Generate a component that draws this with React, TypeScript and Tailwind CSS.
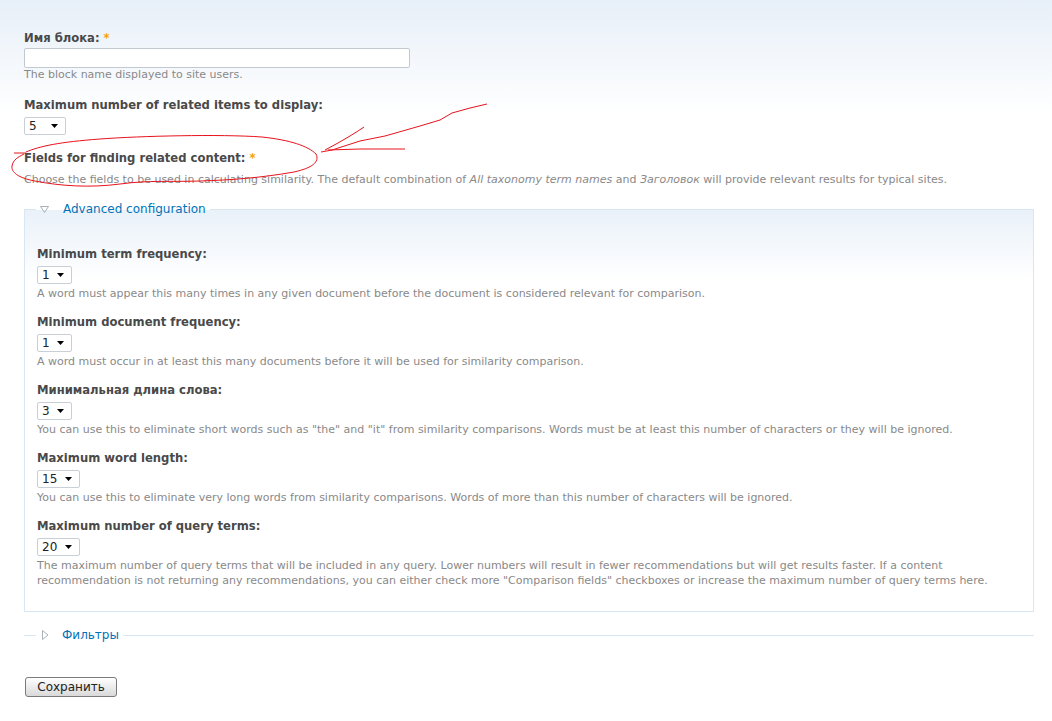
import React from 'react';

const font = "font-['DejaVu_Sans',Verdana,sans-serif]";

function Star() {
  return <span className="text-[#f5a300] font-bold ml-1">*</span>;
}

function Select({ value, width }: { value: string; width: string }) {
  return (
    <div className={`${width} h-[18px] mt-[4px] bg-white border border-[#c9cfd6] rounded-[2px] flex items-center justify-between pl-[4px] pr-[7px] text-[12px] text-[#222]`}>
      <span>{value}</span>
      <svg width="7" height="4" viewBox="0 0 7 4">
        <path d="M0 0 L7 0 L3.5 4 Z" fill="#000" />
      </svg>
    </div>
  );
}

function Item({ label, value, width, desc }: { label: string; value: string; width: string; desc: React.ReactNode }) {
  return (
    <div className="mb-[13px]">
      <div className="text-[11.6px] leading-[16px] font-bold text-[#494949]">{label}</div>
      <Select value={value} width={width} />
      <div className="mt-[2px] text-[11px] leading-[15px] text-[#898989]">{desc}</div>
    </div>
  );
}

function Annotation() {
  return (
    <svg className="absolute left-0 top-0 pointer-events-none" width="520" height="200" viewBox="0 0 520 200" fill="none">
      <path
        d="M14 153 L26 153 M26 152 C40 146 60 142 100 139 C140 136 220 134 262 137 C290 140 308 146 316 154 C320 162 312 168 294 172 C260 178 230 180 200 181 C170 182 150 180 120 184 C90 188 60 186 35 181 C18 178 11 172 12 166 C13 160 18 157 24 154"
        stroke="#e8121c"
        strokeWidth="1"
      />
      <path
        d="M321 152 L332 150 L360 141 L385 136 L420 126 L440 120 L452 113 L470 108 L487 104"
        stroke="#e8121c"
        strokeWidth="1"
      />
      <path d="M325 150 L338 143 L350 136 L358 131 L364 127" stroke="#e8121c" strokeWidth="1" />
      <path d="M328 150 L360 149 L405 149" stroke="#e8121c" strokeWidth="1" />
    </svg>
  );
}

export default function App() {
  return (
    <div className={`${font} relative min-h-[721px] bg-[linear-gradient(to_bottom,#e7eff8_0px,#ffffff_115px)] text-[#494949] pt-[30px] pl-[24px] pr-[18px]`}>
      <Annotation />

      <div className="text-[11.6px] leading-[16px] font-bold text-[#494949]">
        Имя блока:<Star />
      </div>
      <div className="mt-[2px] w-[386px] h-[20px] bg-white border border-[#c3c9d0] rounded-[2px]" />
      <div className="mt-0 text-[11px] leading-[14px] text-[#898989]">The block name displayed to site users.</div>

      <div className="mt-[15px] text-[11.6px] leading-[16px] font-bold text-[#494949]">Maximum number of related items to display:</div>
      <Select value="5" width="w-[42px]" />

      <div className="mt-[15px] text-[11.6px] leading-[16px] font-bold text-[#494949]">
        Fields for finding related content:<Star />
      </div>
      <div className="mt-[7px] text-[11px] leading-[14px] text-[#898989]">
        Choose the fields to be used in calculating similarity. The default combination of <em>All taxonomy term names</em> and <em>Заголовок</em> will provide relevant results for typical sites.
      </div>

      <fieldset className="mt-[14px] border border-[#d9e7f3] bg-[linear-gradient(to_bottom,#e9f1f9_0px,#ffffff_70px)] pl-[12px] pr-[12px] pb-[10px]">
        <legend className="-ml-[1px] px-[4px] flex items-center h-[16px] text-[12px] text-[#0073ba]">
          <svg width="9" height="8" viewBox="0 0 9 8" className="mr-[14px] mt-[-1px]">
            <path d="M0.5 1.5 L8.5 1.5 L4.5 7.5 Z" fill="none" stroke="#a8b0b8" strokeWidth="1" />
          </svg>
          <span>Advanced configuration</span>
        </legend>
        <div className="pt-[29px]">
          <Item
            label="Minimum term frequency:"
            value="1"
            width="w-[35px]"
            desc="A word must appear this many times in any given document before the document is considered relevant for comparison."
          />
          <Item
            label="Minimum document frequency:"
            value="1"
            width="w-[35px]"
            desc="A word must occur in at least this many documents before it will be used for similarity comparison."
          />
          <Item
            label="Минимальная длина слова:"
            value="3"
            width="w-[35px]"
            desc={'You can use this to eliminate short words such as "the" and "it" from similarity comparisons. Words must be at least this number of characters or they will be ignored.'}
          />
          <Item
            label="Maximum word length:"
            value="15"
            width="w-[43px]"
            desc="You can use this to eliminate very long words from similarity comparisons. Words of more than this number of characters will be ignored."
          />
          <Item
            label="Maximum number of query terms:"
            value="20"
            width="w-[43px]"
            desc={'The maximum number of query terms that will be included in any query. Lower numbers will result in fewer recommendations but will get results faster. If a content recommendation is not returning any recommendations, you can either check more "Comparison fields" checkboxes or increase the maximum number of query terms here.'}
          />
        </div>
      </fieldset>

      <fieldset className="mt-[15px] border-t border-[#d9e7f3]">
        <legend className="ml-[12px] px-[4px] flex items-center h-[16px] text-[12px] text-[#0073ba]">
          <svg width="8" height="10" viewBox="0 0 8 10" className="ml-[1px] mr-[13px]">
            <path d="M1.5 0.5 L7 5 L1.5 9.5 Z" fill="none" stroke="#a8b0b8" strokeWidth="1" />
          </svg>
          <span>Фильтры</span>
        </legend>
      </fieldset>

      <button className="mt-[34px] ml-[1px] w-[92px] h-[20px] border border-[#7a7a7a] rounded-[3px] bg-[linear-gradient(to_bottom,#ffffff,#d9d9d9)] text-[12px] text-[#222] leading-[18px]">
        Сохранить
      </button>
    </div>
  );
}
